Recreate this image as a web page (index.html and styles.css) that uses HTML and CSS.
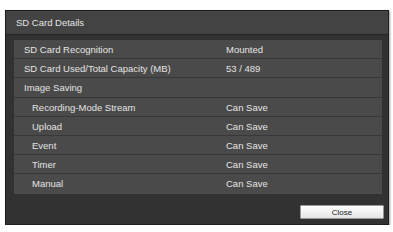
FILE: index.html
```html
<!DOCTYPE html>
<html>
<head>
<meta charset="utf-8">
<link rel="stylesheet" href="styles.css">
</head>
<body>
<div class="dialog">
  <div class="title">SD Card Details</div>
  <div class="content">
    <div class="table">
      <div class="row"><span class="label">SD Card Recognition</span><span class="value">Mounted</span></div>
      <div class="row"><span class="label">SD Card Used/Total Capacity (MB)</span><span class="value">53 / 489</span></div>
      <div class="row"><span class="label">Image Saving</span><span class="value"></span></div>
      <div class="row"><span class="label sub">Recording-Mode Stream</span><span class="value">Can Save</span></div>
      <div class="row"><span class="label sub">Upload</span><span class="value">Can Save</span></div>
      <div class="row"><span class="label sub">Event</span><span class="value">Can Save</span></div>
      <div class="row"><span class="label sub">Timer</span><span class="value">Can Save</span></div>
      <div class="row"><span class="label sub">Manual</span><span class="value">Can Save</span></div>
    </div>
    <div class="actions"><button class="btn">Close</button></div>
  </div>
</div>
</body>
</html>
```
FILE: styles.css
```css
html, body {
  margin: 0;
  padding: 0;
  background: #ffffff;
}
body {
  font-family: "Liberation Sans", Arial, sans-serif;
  font-size: 9.5px;
  color: #e4e4e4;
}
* {
  box-sizing: border-box;
}
.dialog {
  margin: 10px 0 0 5px;
  width: 384px;
  height: 215px;
  background: #323232;
  border: 1px solid #1e1e1e;
  box-shadow: 1px 1px 2px rgba(0,0,0,0.4);
  display: flex;
  flex-direction: column;
}
.title {
  height: 24px;
  line-height: 23px;
  padding-left: 10px;
  background: #434343;
  border-bottom: 1px solid #262626;
}
.content {
  flex: 1;
  padding: 5px 6px 5px 8px;
  display: flex;
  flex-direction: column;
}
.table {
  background: #4a4a4a;
}
.row {
  display: flex;
  height: 19.2px;
  line-height: 19px;
  border-bottom: 1px solid #383838;
}
.row:last-child {
  border-bottom: none;
}
.label {
  width: 212px;
  padding-left: 10px;
}
.label.sub {
  padding-left: 18px;
}
.value {
  flex: 1;
}
.actions {
  margin-top: auto;
  display: flex;
  justify-content: flex-end;
}
.btn {
  width: 84px;
  height: 14px;
  margin-right: -2px;
  padding: 0;
  border: 1px solid #999;
  border-radius: 1px;
  background: linear-gradient(#ffffff, #e4e4e4);
  font-family: "Liberation Sans", Arial, sans-serif;
  font-size: 8px;
  color: #222;
}
```
